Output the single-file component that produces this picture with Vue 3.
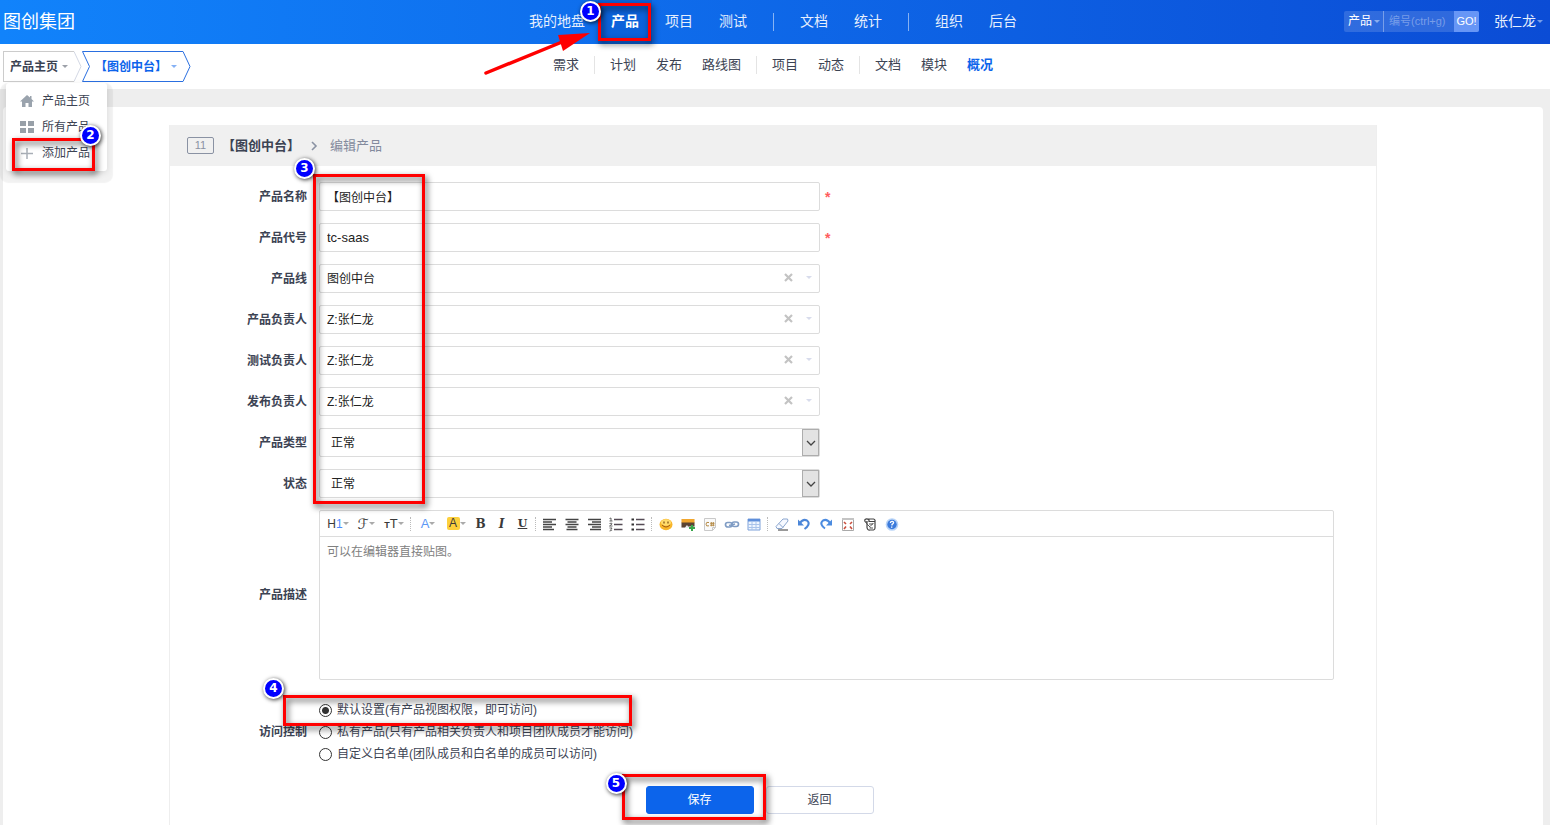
<script setup>
import { ref } from 'vue'

const mainNav = [
  ['我的地盘', '产品', '项目', '测试'],
  ['文档', '统计'],
  ['组织', '后台'],
]
const subNav = [
  ['需求'],
  ['计划', '发布', '路线图'],
  ['项目', '动态'],
  ['文档', '模块', '概况'],
]

const menu = [
  { text: '产品主页', icon: '<path d="M7 1 0 7.500h2V13h3.500V9h3v4H12V7.500h2L11.500 5V2H10v1.600z" fill="#9aa3ad"/>' },
  { text: '所有产品', icon: '<path d="M0 1h6v5H0zM8 1h6v5H8zM0 8h6v5H0zM8 8h6v5H8z" fill="#98a0a8"/>' },
  { text: '添加产品', icon: '<path d="M7 2v11M1 7.500h12" stroke="#a8aeb6" stroke-width="1.500"/>', step: 2 },
]

const name = ref('【图创中台】')
const code = ref('tc-saas')
const pickers = [
  { id: 'line', label: '产品线', value: '图创中台' },
  { id: 'po', label: '产品负责人', value: 'Z:张仁龙' },
  { id: 'qd', label: '测试负责人', value: 'Z:张仁龙' },
  { id: 'rd', label: '发布负责人', value: 'Z:张仁龙' },
]
const selects = [
  { id: 'type', label: '产品类型', value: '正常' },
  { id: 'status', label: '状态', value: '正常' },
]
const acl = ref('open')
const aclOptions = [
  { value: 'open', text: '默认设置(有产品视图权限，即可访问)' },
  { value: 'private', text: '私有产品(只有产品相关负责人和项目团队成员才能访问)' },
  { value: 'custom', text: '自定义白名单(团队成员和白名单的成员可以访问)' },
]

const toolGroups = [
  [
    { title: '左对齐', icon: '<path d="M1 3.500h13M1 6h9M1 8.500h13M1 11h9M1 13.500h11" stroke="#444" stroke-width="1.300"/>' },
    { title: '居中', icon: '<path d="M1.500 3.500h13M3.500 6h9M1.500 8.500h13M3.500 11h9M2.500 13.500h11" stroke="#444" stroke-width="1.300"/>' },
    { title: '右对齐', icon: '<path d="M2 3.500h13M6 6h9M2 8.500h13M6 11h9M4 13.500h11" stroke="#444" stroke-width="1.300"/>' },
    { title: '编号', icon: '<path d="M6 3.500h8.500M6 8.500h8.500M6 13.500h8.500" stroke="#554b55" stroke-width="1.300"/><path d="M1.500 2.500 3 2v3M1.500 5h3M1.500 7.500q3-1 2.500.5L1.500 10h3M1.500 12h2.500l-1 1.500q2 1-1.500 1.500" stroke="#555" fill="none" stroke-width=".9"/>' },
    { title: '项目符号', icon: '<path d="M6 3.500h8.500M6 8.500h8.500M6 13.500h8.500" stroke="#554b55" stroke-width="1.300"/><path d="M1.500 2.500h2.500v2H1.500zM1.500 7.500h2.500v2H1.500zM1.500 12.500h2.500v2H1.500z" fill="#333"/>' },
  ],
  [
    { title: '表情', icon: '<ellipse cx="8" cy="8.500" rx="6.500" ry="5.800" fill="#f8b62c"/><ellipse cx="8" cy="6.500" rx="5" ry="3.300" fill="#ffdc6e"/><path d="M6 5.500v2M10 5.500v2" stroke="#7a4b10" stroke-width="1.200"/><path d="M4 9q4 4 8 0" fill="none" stroke="#a15a10"/>' },
    { title: '图片', icon: '<path d="M1.500 3h13v9h-13z" fill="#e9edf2"/><path d="M1.500 3h13v4h-13z" fill="#f1a62e"/><path d="M1.500 6.500h13v4H8L7 9l-2 2.500H1.500z" fill="#5b4332"/><path d="M12 9v6M9 12h6" stroke="#39a64a" stroke-width="2"/>' },
    { title: '插入代码', icon: '<path d="M2.500 2.500h11v9l-3 3h-8z" fill="#fafafa" stroke="#c9c9c9"/><path d="M13.500 11.500h-3v3" fill="none" stroke="#c9c9c9"/><path d="M7 6.500q-3-1-3 1.700t3 1.600M9.300 6v4.300M11.300 6v4.300M8.200 7.300h4.300M8.200 9.200h4.300" fill="none" stroke="#b58a45"/>' },
    { title: '超级链接', icon: '<g fill="none" stroke="#7f9cc4" stroke-width="1.700"><rect x="1.500" y="6.500" width="6.500" height="4.500" rx="2.200"/><rect x="8" y="6" width="6.500" height="4.500" rx="2.200"/><path d="M5 9.500 11 8"/></g>' },
    { title: '表格', icon: '<path d="M2 3h12v11H2z" fill="#eef5ff" stroke="#7ea2da"/><path d="M2 3h12v2.500H2z" fill="#5f8fdb"/><path d="M2 8.500h12M2 11.500h12M6 5v9M10 5v9" stroke="#a9c3ea"/>' },
  ],
  [
    { title: '清理代码', icon: '<path d="m2 10.500 7-7.500h4.500l.5 2-6 7.500H3z" fill="#f6f9ff" stroke="#8ba6cf"/><path d="m5 7.500 4 4" stroke="#8ba6cf"/><path d="M4 14h10" stroke="#555" stroke-width="1.200"/>' },
    { title: '后退', icon: '<path d="M4 7q3-4.500 7-2.500c3.500 2.500 1 6-2.500 8.500" fill="none" stroke="#4b86d8" stroke-width="2"/><path d="M2 3.500v6h6z" fill="#4b86d8"/>' },
    { title: '前进', icon: '<path d="M12 7Q9 2.500 5 4.500C1.500 7 4 10.500 7 12.500" fill="none" stroke="#4b8be0" stroke-width="2"/><path d="M14 3.500v6H8z" fill="#4b8be0"/>' },
    { title: '全屏', icon: '<path d="M2.500 2.500h11v12h-11z" fill="#fff" stroke="#a9a9a9"/><path d="M2 2h12v2H2z" fill="#c4c4c4"/><path d="m4 6 2 2M12 6l-2 2M4 13l2-2.500M12 13l-2-2.500" stroke="#c94f3e" stroke-width="1.600"/>' },
    { title: 'HTML代码', icon: '<path d="M5 5v6.500q.5 3 3 2.500h3.500q1.500-.5 1.500-2V5M4 3h7.500q2 .5 1.500 2.500H7V4Q5 2 3 3.500 2 6 5 6.500" fill="none" stroke="#444" stroke-width="1.200"/><path d="m3.500 6.500 5 5M7 8h4M8 10.500 11.500 7M7.500 12h3.500" stroke="#555"/>' },
    { title: '关于', icon: '<circle cx="8" cy="8.500" r="6.300" fill="#b9d4f7"/><circle cx="8" cy="8.500" r="4.700" fill="#3c7bdc"/><path d="M6.300 7q.3-1.800 2-1.600c2 .3 1.500 2-.3 3v1M7.700 10.500v1.300" fill="none" stroke="#fff" stroke-width="1.300"/>' },
  ],
]
</script>

<template>
  <div class="page">
    <header class="top">
      <a class="logo" href="#">图创集团</a>
      <nav class="main-nav">
        <template v-for="(group, g) in mainNav" :key="g">
          <span v-if="g" class="bar"></span>
          <a v-for="t in group" :key="t" href="#" :class="{ active: t === '产品' }">{{ t }}
            <template v-if="t === '产品'">
              <span class="mark mark-nav"></span>
              <svg class="arrow" width="112" height="46" viewBox="0 0 112 46">
                <path d="M2 42 78 11" stroke="red" stroke-width="3.500" stroke-linecap="round" />
                <path d="m74 4 32-2-27 18z" fill="red" />
              </svg>
              <b class="step step-nav">1</b>
            </template>
          </a>
        </template>
      </nav>
      <div class="top-right">
        <form class="search" @submit.prevent>
          <div class="scope">
            <select aria-label="搜索范围"><option>产品</option></select>
            <i class="caret"></i>
          </div>
          <input type="text" placeholder="编号(ctrl+g)" aria-label="编号">
          <button type="submit">GO!</button>
        </form>
        <button class="user" type="button">张仁龙<i class="caret"></i></button>
      </div>
    </header>

    <div class="sub">
      <div class="crumbs">
        <div class="crumb">
          <button type="button" class="crumb-body first">产品主页<i class="caret"></i></button>
          <svg class="tip" width="8" height="31" viewBox="0 0 8 31"><path d="M0 .5 7 15.500 0 30.500" fill="none" stroke="#d3d8e4" /></svg>
          <div class="menu">
            <a v-for="m in menu" :key="m.text" href="#">
              <svg width="14" height="14" viewBox="0 0 14 14" v-html="m.icon"></svg>{{ m.text }}
              <template v-if="m.step">
                <span class="mark mark-menu"></span>
                <b class="step step-menu">{{ m.step }}</b>
              </template>
            </a>
          </div>
        </div>
        <div class="crumb current">
          <svg width="8" height="31" viewBox="0 0 8 31"><path d="M8 .5H.5l7 15-7 15H8" fill="none" stroke="#2a6fe0" /></svg>
          <button type="button" class="crumb-body">【图创中台】<i class="caret"></i></button>
          <svg width="8" height="31" viewBox="0 0 8 31"><path d="M0 .5 7 15.500 0 30.500" fill="none" stroke="#2a6fe0" /></svg>
        </div>
      </div>
      <nav class="sub-nav">
        <template v-for="(group, g) in subNav" :key="g">
          <span v-if="g" class="bar"></span>
          <a v-for="t in group" :key="t" href="#" :class="{ active: t === '概况' }">{{ t }}</a>
        </template>
      </nav>
    </div>

    <main class="panel">
      <section class="card">
        <div class="card-head">
          <span class="id">11</span>
          <h2>【图创中台】</h2>
          <svg width="8" height="10" viewBox="0 0 8 10"><path d="m2 1 4 4-4 4" fill="none" stroke="#8a92a3" stroke-width="1.600" /></svg>
          <small>编辑产品</small>
        </div>

        <form class="form" @submit.prevent>
          <div class="row">
            <label for="name">产品名称</label>
            <div class="field"><input id="name" v-model="name" class="box" type="text"><span class="req">*</span></div>
          </div>
          <div class="row">
            <label for="code">产品代号</label>
            <div class="field"><input id="code" v-model="code" class="box latin" type="text"><span class="req">*</span></div>
          </div>
          <div v-for="p in pickers" :key="p.id" class="row">
            <label :for="p.id">{{ p.label }}</label>
            <div class="field">
              <div class="wrap">
                <select :id="p.id" class="box"><option>{{ p.value }}</option></select>
                <div class="picker-tools">
                  <button type="button" aria-label="清除">
                    <svg width="9" height="9" viewBox="0 0 9 9"><path d="m1 1 7 7M8 1 1 8" stroke="#c3c3c3" stroke-width="2.200" /></svg>
                  </button>
                  <i class="caret"></i>
                </div>
              </div>
            </div>
          </div>
          <div v-for="s in selects" :key="s.id" class="row">
            <label :for="s.id">{{ s.label }}</label>
            <div class="field">
              <div class="wrap">
                <select :id="s.id" class="box native"><option>{{ s.value }}</option></select>
                <span class="drop">
                  <svg width="10" height="6" viewBox="0 0 10 6"><path d="m1 1 4 4 4-4" fill="none" stroke="#444" stroke-width="1.300" /></svg>
                </span>
              </div>
            </div>
          </div>

          <div class="row">
            <label for="desc">产品描述</label>
            <div class="editor">
              <div class="toolbar">
                <button type="button" class="wide h1" title="段落">H<em>1</em><i class="caret"></i></button>
                <button type="button" class="wide script" title="字体">ℱ<i class="caret"></i></button>
                <button type="button" class="wide tt" title="文字大小"><small>T</small>T<i class="caret"></i></button>
                <span class="dots"></span>
                <button type="button" class="wide fore" title="文字颜色">A<i class="caret"></i></button>
                <button type="button" class="wide back" title="文字背景"><span>A</span><i class="caret"></i></button>
                <button type="button" class="serif" title="粗体">B</button>
                <button type="button" class="serif italic" title="斜体">I</button>
                <button type="button" class="serif under" title="下划线">U</button>
                <template v-for="(group, g) in toolGroups" :key="g">
                  <span class="dots"></span>
                  <button v-for="t in group" :key="t.title" type="button" :title="t.title">
                    <svg width="16" height="16" viewBox="0 0 16 16" v-html="t.icon"></svg>
                  </button>
                </template>
              </div>
              <textarea id="desc" placeholder="可以在编辑器直接贴图。"></textarea>
            </div>
          </div>

          <div class="row acl" role="radiogroup" aria-labelledby="acl-label">
            <span id="acl-label" class="label">访问控制</span>
            <div class="radios">
              <label v-for="o in aclOptions" :key="o.value">
                <input v-model="acl" type="radio" name="acl" :value="o.value">{{ o.text }}
              </label>
              <span class="mark mark-acl"></span>
              <b class="step step-acl">4</b>
            </div>
          </div>

          <div class="actions">
            <div class="save">
              <button type="submit" class="btn primary">保存</button>
              <span class="mark mark-save"></span>
              <b class="step step-save">5</b>
            </div>
            <button type="button" class="btn">返回</button>
          </div>

          <span class="mark mark-fields"></span>
          <b class="step step-fields">3</b>
        </form>
      </section>
    </main>
  </div>
</template>

<style>
body {
  margin: 0;
  background: #eee;
}
</style>

<style scoped>
* {
  box-sizing: border-box;
}
.page {
  display: flex;
  flex-direction: column;
  min-height: 100vh;
  font: 12px/20px "Liberation Sans", "Noto Sans CJK SC", sans-serif;
  color: #3c4353;
}
a {
  color: inherit;
  text-decoration: none;
}
button,
input,
select,
textarea {
  margin: 0;
  padding: 0;
  border: 0;
  border-radius: 0;
  background: none;
  font: inherit;
  color: inherit;
  outline: 0;
}
select {
  appearance: none;
}
.caret {
  flex: none;
  width: 6px;
  border: 3px solid transparent;
  border-top-color: currentColor;
  border-bottom: 0;
}

.top {
  display: grid;
  grid-template-columns: 1fr auto 1fr;
  align-items: center;
  height: 44px;
  padding: 0 7px 0 3px;
  background: linear-gradient(90deg, #1183fb, #0b4cd5);
  color: #e6effd;
}
.logo {
  font-size: 18px;
  line-height: 40px;
  color: #fff;
}
.main-nav {
  display: flex;
  align-items: center;
  font-size: 14px;
  line-height: 42px;
}
.main-nav a {
  position: relative;
  height: 44px;
  padding: 0 13px;
}
.main-nav .active {
  background: rgba(0, 40, 120, 0.15);
  font-weight: bold;
  color: #fff;
}
.main-nav .bar {
  width: 1px;
  height: 18px;
  margin: 0 13px;
  background: rgba(255, 255, 255, 0.5);
}
.top-right {
  display: flex;
  justify-content: flex-end;
  align-items: center;
  gap: 15px;
  padding-bottom: 2px;
}
.search {
  display: flex;
  height: 21px;
  border-radius: 2px;
  overflow: hidden;
  background: rgba(255, 255, 255, 0.15);
}
.scope {
  display: flex;
  align-items: center;
  width: 40px;
  padding-right: 3px;
  border-right: 1px solid rgba(255, 255, 255, 0.35);
}
.scope select {
  width: 30px;
  padding-left: 4px;
  color: #fff;
}
.scope select option {
  color: #333;
}
.scope .caret,
.user .caret {
  opacity: 0.5;
}
.search input {
  width: 70px;
  padding: 0 5px;
  font-size: 11px;
}
.search input::placeholder {
  color: rgba(255, 255, 255, 0.35);
}
.search button {
  width: 25px;
  background: #6796f6;
  font-size: 11px;
  color: #fff;
}
.user {
  display: flex;
  align-items: center;
  gap: 1px;
  font-size: 14px;
}

.sub {
  display: grid;
  grid-template-columns: 1fr auto 1fr;
  height: 45px;
  padding: 0 7px 0 3px;
  background: #fff;
}
.crumbs {
  display: flex;
  padding-top: 7px;
}
.crumb {
  position: relative;
  display: flex;
  height: 31px;
}
.crumb-body {
  display: flex;
  align-items: center;
  height: 31px;
  gap: 4px;
  padding-right: 6px;
  border: solid #2a6fe0;
  border-width: 1px 0;
  font-weight: bold;
}
.crumb-body.first {
  padding-left: 6px;
  border-color: #ccc;
  border-left-width: 1px;
}
.crumb-body .caret {
  opacity: 0.5;
}
.current {
  color: #0c64eb;
}
.current .crumb-body {
  padding: 0 6px 0 5px;
}
.menu {
  position: absolute;
  z-index: 2;
  top: 32px;
  left: 3px;
  width: 101px;
  padding: 5px 0;
  border-radius: 3px;
  background: #fff;
  box-shadow: 0 6px 1px 6px rgba(0, 0, 0, 0.05), 0 2px 6px rgba(0, 0, 0, 0.1);
}
.menu a {
  position: relative;
  display: flex;
  align-items: center;
  gap: 8px;
  height: 26px;
  padding-left: 14px;
}
.sub-nav {
  display: flex;
  align-items: center;
  height: 42px;
  font-size: 13px;
}
.sub-nav a {
  padding: 0 10px;
}
.sub-nav .active {
  font-weight: bold;
  color: #0c64eb;
}
.sub-nav .bar {
  width: 1px;
  height: 18px;
  margin: 0 5px;
  background: #e4e4e4;
}

.panel {
  flex: 1;
  display: flex;
  margin: 18px 7px 0 3px;
  padding: 18px 20px 0;
  border-radius: 4px 4px 0 0;
  background: #fff;
}
.card {
  flex: 1;
  max-width: 1208px;
  margin: 0 auto;
  border: 1px solid #eee;
  border-width: 0 1px;
}
.card-head {
  display: flex;
  align-items: center;
  height: 41px;
  padding-left: 17px;
  background: #f0f0f0;
  font-size: 13px;
}
.id {
  width: 27px;
  margin-right: 8px;
  border: 1px solid #8a92a3;
  border-radius: 2px;
  font-size: 11px;
  line-height: 15px;
  text-align: center;
  color: #8a92a3;
}
.card-head h2 {
  margin: 0 10px 0 0;
  font-size: 13px;
}
.card-head small {
  margin-left: 12px;
  font-size: 13px;
  color: #838a9d;
}

.form {
  position: relative;
  display: flex;
  flex-direction: column;
  gap: 12px;
  padding: 16px 42px 0 15px;
}
.row {
  display: grid;
  grid-template-columns: 122px minmax(0, 1fr);
  gap: 12px;
  align-items: center;
}
.row > label,
.label {
  font-weight: bold;
  text-align: right;
}
.field {
  display: flex;
  align-items: center;
  gap: 5px;
}
.wrap {
  position: relative;
  flex: 0 1 501px;
}
.box {
  flex: 0 1 501px;
  height: 29px;
  padding: 0 7px;
  border: 1px solid #dcdcdc;
  border-radius: 2px;
  background: #fff;
  color: #222;
}
.wrap .box {
  display: block;
  width: 100%;
}
.latin {
  font-size: 13px;
}
.box.native {
  padding-left: 11px;
}
.req {
  font-size: 14px;
  font-weight: bold;
  color: #ff5d5d;
}
.picker-tools {
  position: absolute;
  top: 0;
  right: 8px;
  display: flex;
  align-items: center;
  gap: 13px;
  height: 27px;
}
.picker-tools button {
  display: flex;
}
.picker-tools .caret {
  color: #d8dcec;
}
.drop {
  position: absolute;
  top: 1px;
  right: 1px;
  bottom: 1px;
  display: flex;
  align-items: center;
  justify-content: center;
  width: 17px;
  border: 1px solid #adadad;
  background: #e3e3e3;
  pointer-events: none;
}

.editor {
  height: 170px;
  display: flex;
  flex-direction: column;
  border: 1px solid #dcdcdc;
  border-radius: 2px;
}
.toolbar {
  display: flex;
  align-items: center;
  height: 26px;
  padding-left: 4px;
  border-bottom: 1px solid #dcdcdc;
}
.toolbar button {
  display: flex;
  align-items: center;
  justify-content: center;
  width: 22px;
  height: 20px;
  color: #3a3a3a;
}
.toolbar .wide {
  width: 28px;
}
.toolbar .caret {
  width: 6px;
  color: #aaa;
}
.toolbar em {
  font-style: normal;
  color: #4b8bff;
}
.toolbar .script {
  font: 14px "DejaVu Sans", sans-serif;
}
.toolbar .tt {
  font-size: 13px;
}
.toolbar .tt small {
  padding-top: 3px;
  font-size: 9px;
  font-weight: bold;
}
.toolbar .fore {
  font-size: 13px;
  color: #5b97f5;
}
.back span {
  width: 13px;
  border-radius: 2px;
  background: #fdd03c;
  line-height: 13px;
}
.toolbar .serif {
  width: 21px;
  font: bold 12px "DejaVu Serif", serif;
}
.toolbar .italic {
  font-style: italic;
}
.toolbar .under {
  font-size: 11px;
  text-decoration: underline;
}
.dots {
  height: 14px;
  margin: 0 3px 0 2px;
  border-left: 1px dotted #bbb;
}
.editor textarea {
  flex: 1;
  padding: 5px 7px;
  resize: none;
}
.editor textarea::placeholder {
  color: #808080;
}

.acl {
  margin-top: 7px;
}
.radios {
  position: relative;
  display: flex;
  flex-direction: column;
  align-items: flex-start;
}
.radios label {
  display: flex;
  align-items: center;
  gap: 5px;
  height: 22px;
}
.radios input {
  appearance: none;
  width: 13px;
  height: 13px;
  border: 1px solid #333;
  border-radius: 50%;
  background: #fff;
}
.radios input:checked {
  background: radial-gradient(circle, #333 3px, #fff 4px);
}

.actions {
  display: flex;
  justify-content: center;
  gap: 12px;
  margin-top: 9px;
}
.save {
  position: relative;
}
.btn {
  width: 108px;
  height: 28px;
  border: 1px solid #d3d9e8;
  border-radius: 3px;
  background: #fff;
}
.primary {
  display: block;
  border-color: #0c64eb;
  background: #0c64eb;
  color: #fff;
}

.mark {
  position: absolute;
  z-index: 3;
  border: 3px solid #f00;
  filter: drop-shadow(2px 3px 3px rgba(0, 0, 0, 0.7));
  pointer-events: none;
}
.step {
  position: absolute;
  z-index: 4;
  width: 21px;
  height: 21px;
  border: 2px solid #fff;
  border-radius: 50%;
  background: #00f;
  box-shadow: 1px 1px 4px rgba(0, 0, 0, 0.8);
  font: bold 12px/17px "DejaVu Sans", sans-serif;
  text-align: center;
  color: #fff;
  pointer-events: none;
}
.mark-nav {
  top: 3px;
  left: 0;
  width: 53px;
  height: 38px;
}
.step-nav {
  top: 1px;
  left: -18px;
}
.arrow {
  position: absolute;
  z-index: 3;
  top: 31px;
  left: -114px;
  pointer-events: none;
}
.mark-menu {
  top: -2px;
  left: 6px;
  width: 83px;
  height: 33px;
}
.step-menu {
  top: -15px;
  left: 74px;
}
.mark-fields {
  top: 8px;
  left: 143px;
  width: 112px;
  height: 330px;
}
.step-fields {
  top: -8px;
  left: 124px;
}
.mark-acl {
  top: -4px;
  left: -36px;
  width: 349px;
  height: 31px;
}
.step-acl {
  top: -21px;
  left: -56px;
}
.mark-save {
  top: -12px;
  left: -24px;
  width: 144px;
  height: 46px;
}
.step-save {
  top: -13px;
  left: -40px;
}
</style>
